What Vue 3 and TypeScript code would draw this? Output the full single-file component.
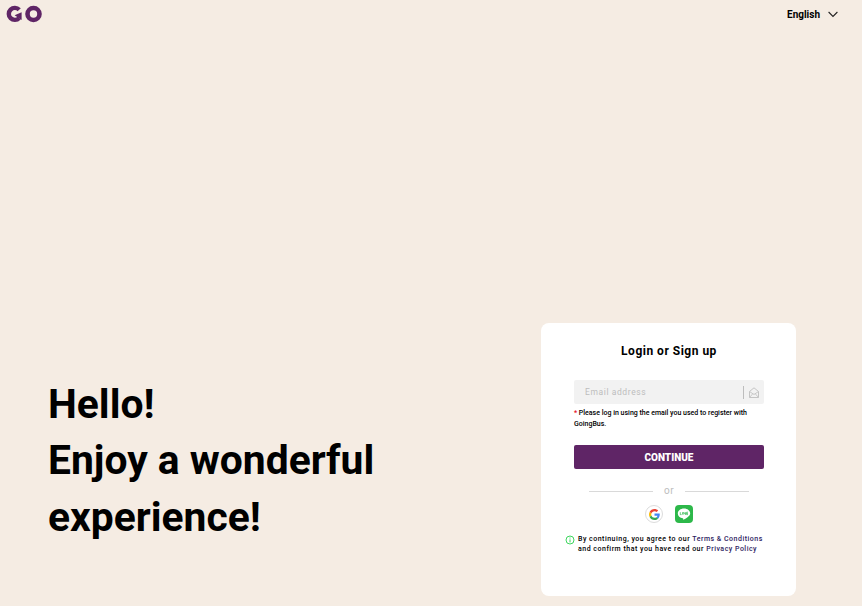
<script setup lang="ts">
import { ref } from 'vue'

const email = ref('')
</script>

<template>
  <div class="page">
    <header class="topbar">
      <svg class="logo" width="38" height="18" viewBox="0 0 38 18" aria-label="GO">
        <path d="M14.2 4.8A6 6 0 1 0 14.2 13" fill="none" stroke="#5f2566" stroke-width="4.4" />
        <path d="M16.6 7.2V15L9.6 10.2Z" fill="#5f2566" />
        <circle cx="28.5" cy="9" r="6" fill="none" stroke="#5f2566" stroke-width="4.6" />
      </svg>
      <div class="lang">
        <span>English</span>
        <svg width="10" height="7" viewBox="0 0 10 7">
          <path d="M.6 1l4.400 4.400L9.400 1" fill="none" stroke="#222" stroke-width="1.1" />
        </svg>
      </div>
    </header>

    <main class="main">
      <h1 class="hero">Hello!<br />Enjoy a wonderful<br />experience!</h1>

      <section class="card">
        <h2 class="card__title">Login or Sign up</h2>

        <div class="field">
          <input v-model="email" class="field__input" type="text" placeholder="Email address" />
          <span class="field__divider"></span>
          <svg width="10" height="11" viewBox="0 0 10 11">
            <path d="M.5 4.500L5 .8l4.500 3.700v6H.5z" fill="none" stroke="#c4c4c4" stroke-width="1" />
            <path d="M.5 4.500L5 7.500l4.500-3M.5 10.500l3.300-3.800M9.500 10.500L6.200 6.700" fill="none" stroke="#c4c4c4" stroke-width=".9" />
          </svg>
        </div>
        <p class="note"><span class="note__star">*</span> Please log in using the email you used to register with GoingBus.</p>

        <button class="continue" type="button">CONTINUE</button>

        <div class="or">
          <span class="or__line"></span>
          <span>or</span>
          <span class="or__line"></span>
        </div>

        <div class="social">
          <span class="social__google">
            <svg width="11" height="11" viewBox="0 0 48 48">
              <path fill="#EA4335" d="M24 9.500c3.500 0 6.700 1.300 9.100 3.500l6.800-6.800C35.800 2.400 30.200 0 24 0 14.600 0 6.500 5.400 2.600 13.200l7.900 6.100C12.400 13.600 17.700 9.500 24 9.500z" />
              <path fill="#4285F4" d="M46.900 24.500c0-1.600-.1-3.100-.4-4.500H24v9h12.900c-.6 3-2.200 5.500-4.700 7.200l7.600 5.900c4.400-4.100 7.100-10.200 7.100-17.600z" />
              <path fill="#FBBC05" d="M10.500 28.700c-.5-1.400-.8-3-.8-4.700s.3-3.200.8-4.700l-7.900-6.100C.9 16.500 0 20.100 0 24s.9 7.500 2.600 10.800z" />
              <path fill="#34A853" d="M24 48c6.500 0 11.900-2.100 15.900-5.800l-7.600-5.900c-2.100 1.400-4.900 2.300-8.200 2.300-6.300 0-11.600-4.200-13.500-9.900l-7.900 6.100C6.500 42.600 14.600 48 24 48z" />
            </svg>
          </span>
          <svg class="social__line" width="18" height="18" viewBox="0 0 18 18">
            <rect width="18" height="18" rx="4" fill="#2db84a" />
            <path d="M9 3.500c-3.500 0-6.200 2.200-6.200 4.900 0 2.400 2.100 4.400 5 4.800.5.100.4.500.3 1.200 0 .3.200.4.500.2 1.900-1.100 6.600-3.500 6.600-6.200 0-2.700-2.700-4.900-6.200-4.900z" fill="#fff" />
            <path d="M5.300 7.200v2.400h1.300M7.500 7.200v2.400M8.700 9.600V7.200l1.800 2.400V7.200M13 7.200h-1.400v2.400H13M11.600 8.400H13" fill="none" stroke="#2db84a" stroke-width=".7" />
          </svg>
        </div>

        <div class="terms">
          <svg class="terms__icon" width="10" height="10" viewBox="0 0 10 10">
            <circle cx="5" cy="5" r="4" fill="none" stroke="#3fd65f" stroke-width="1" />
            <path d="M5 4.400v3M5 2.500v1" stroke="#3fd65f" stroke-width="1" />
          </svg>
          <p>By continuing, you agree to our <a class="terms__link">Terms &amp; Conditions</a><br />and confirm that you have read our <a class="terms__link">Privacy Policy</a></p>
        </div>
      </section>
    </main>
  </div>
</template>

<style>
body {
  margin: 0;
  background: #f5ece3;
}
</style>

<style scoped>
.page {
  height: 606px;
  display: flex;
  flex-direction: column;
  background: #f5ece3;
  font-family: Roboto, "Liberation Sans", sans-serif;
  color: #000;
  overflow: hidden;
}

.topbar {
  height: 28px;
  display: flex;
  align-items: center;
  justify-content: space-between;
  padding: 0 24px 0 5px;
}

.lang {
  display: flex;
  align-items: center;
  gap: 8px;
  font-size: 10px;
  font-weight: 700;
}

.main {
  flex: 1;
  display: flex;
  align-items: flex-end;
  justify-content: space-between;
  padding: 0 66px 10px 48px;
}

.hero {
  margin: 0 0 51px;
  font-size: 40.800px;
  line-height: 56.500px;
  font-weight: 700;
}

.card {
  width: 255px;
  height: 273px;
  box-sizing: border-box;
  padding: 21px 32px 0 33px;
  background: #fff;
  border-radius: 8px;
  display: flex;
  flex-direction: column;
}

.card__title {
  margin: 0 0 22px;
  font-size: 12px;
  line-height: 14px;
  font-weight: 700;
  letter-spacing: 0.5px;
  text-align: center;
}

.field {
  height: 24px;
  display: flex;
  align-items: center;
  padding: 0 5px 0 11px;
  background: #f2f2f2;
  border-radius: 2px;
}

.field__input {
  flex: 1;
  min-width: 0;
  border: 0;
  padding: 0;
  outline: 0;
  background: transparent;
  font-family: inherit;
  font-size: 8.500px;
  letter-spacing: 0.6px;
}

.field__input::placeholder {
  color: #bdbdbd;
}

.field__divider {
  width: 1px;
  height: 13px;
  margin-right: 5px;
  background: #bdbdbd;
}

.note {
  margin: 4px 0 0;
  font-size: 7px;
  line-height: 11px;
  font-weight: 500;
}

.note__star {
  color: #e60012;
}

.continue {
  height: 24px;
  margin-top: 15px;
  border: 0;
  padding: 0;
  background: #5f2566;
  border-radius: 2px;
  color: #fff;
  font-family: inherit;
  font-size: 10px;
  font-weight: 900;
}

.or {
  display: flex;
  align-items: center;
  justify-content: center;
  gap: 11px;
  margin-top: 16px;
  font-size: 10px;
  line-height: 12px;
  letter-spacing: 0.5px;
  color: #bdbdbd;
}

.or__line {
  width: 64px;
  height: 1px;
  background: #d9d9d9;
}

.social {
  display: flex;
  align-items: center;
  justify-content: center;
  gap: 12px;
  margin-top: 8px;
}

.social__google {
  width: 18px;
  height: 18px;
  box-sizing: border-box;
  display: flex;
  align-items: center;
  justify-content: center;
  border: 1px solid #dcdcdc;
  border-radius: 50%;
}

.social__line {
  display: block;
}

.terms {
  display: flex;
  align-items: flex-start;
  gap: 3px;
  margin: 11px -9px 0;
  font-size: 7px;
  line-height: 10px;
  font-weight: 500;
  letter-spacing: 0.5px;
}

.terms p {
  margin: 0;
}

.terms__icon {
  flex: none;
  margin-top: 1px;
}

.terms__link {
  color: #2c1a5e;
}
</style>
